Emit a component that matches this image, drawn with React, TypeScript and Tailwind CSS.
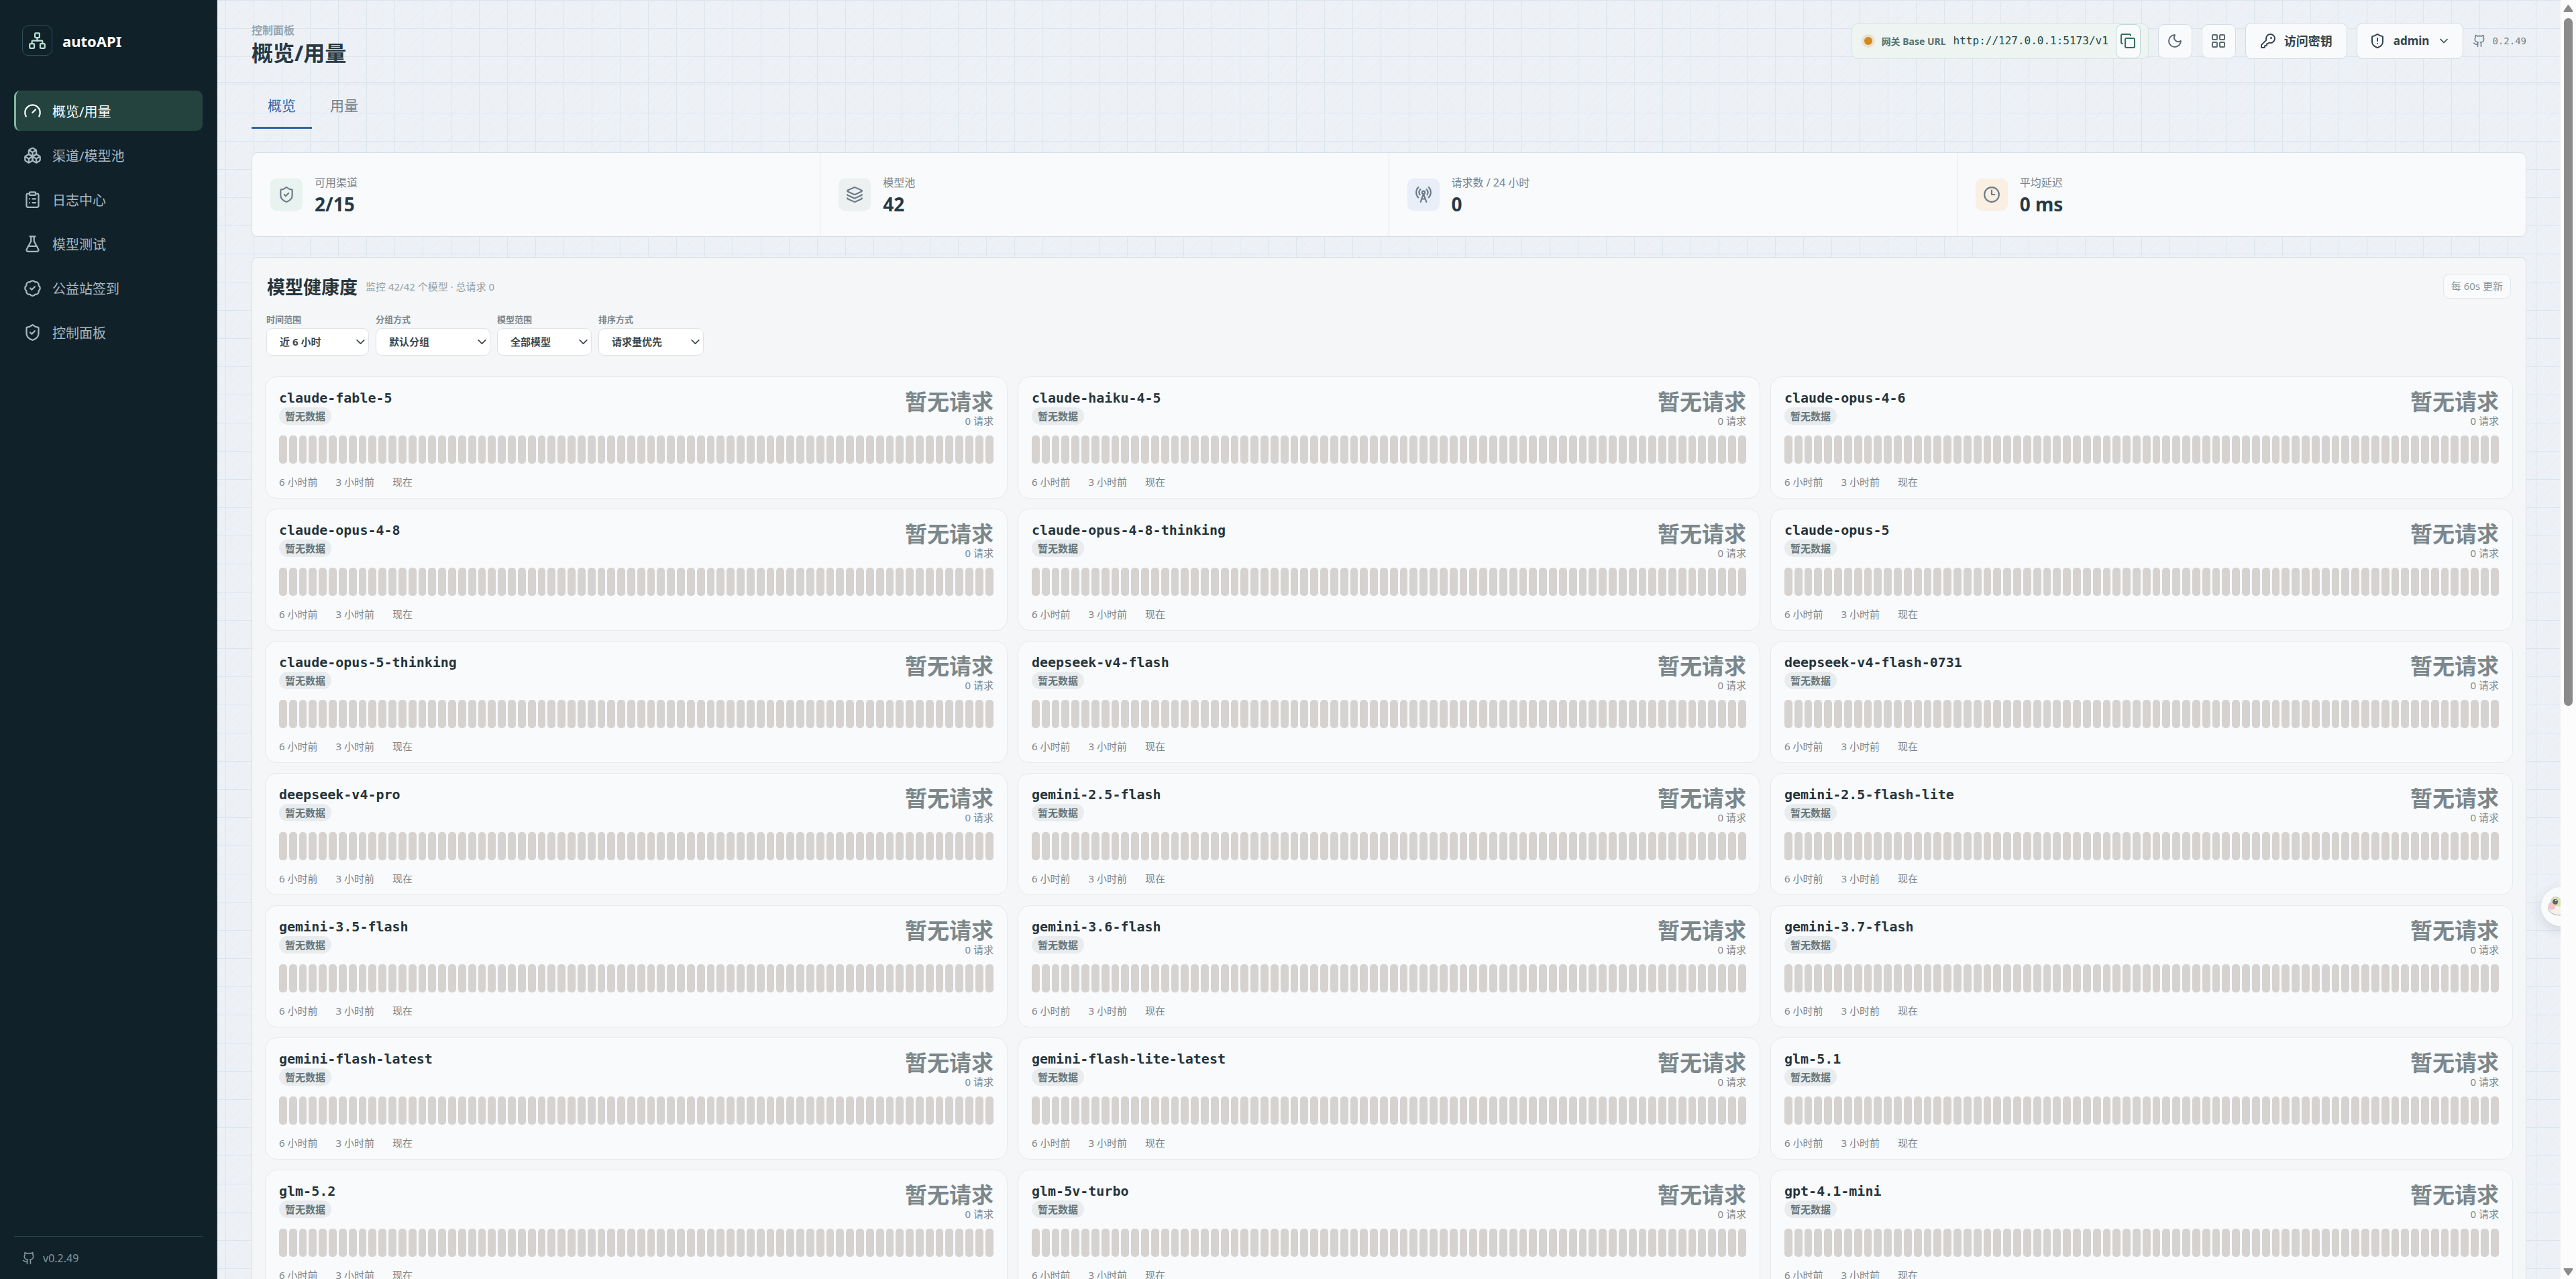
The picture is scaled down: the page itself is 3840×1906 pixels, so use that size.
import * as React from "react";
import {
  BadgeCheck,
  Boxes,
  ChevronDown,
  ClipboardList,
  Clock3,
  Copy,
  FlaskConical,
  Gauge,
  Github,
  KeyRound,
  Layers,
  LayoutGrid,
  Moon,
  Network,
  RadioTower,
  ShieldAlert,
  ShieldCheck,
  type LucideIcon,
} from "lucide-react";
import clsx from "clsx";

const NAV: { label: string; icon: LucideIcon }[] = [
  { label: "概览/用量", icon: Gauge },
  { label: "渠道/模型池", icon: Boxes },
  { label: "日志中心", icon: ClipboardList },
  { label: "模型测试", icon: FlaskConical },
  { label: "公益站签到", icon: BadgeCheck },
  { label: "控制面板", icon: ShieldCheck },
];

const STATS: { label: string; value: string; icon: LucideIcon; tone: string }[] = [
  { label: "可用渠道", value: "2/15", icon: ShieldCheck, tone: "bg-[#e8f2ee]" },
  { label: "模型池", value: "42", icon: Layers, tone: "bg-[#ecf0f1]" },
  { label: "请求数 / 24 小时", value: "0", icon: RadioTower, tone: "bg-[#e8eff8]" },
  { label: "平均延迟", value: "0 ms", icon: Clock3, tone: "bg-[#f9f0e3]" },
];

const FILTERS = [
  { id: "range", label: "时间范围", value: "近 6 小时", width: "w-[153px]" },
  { id: "group", label: "分组方式", value: "默认分组", width: "w-[171px]" },
  { id: "scope", label: "模型范围", value: "全部模型", width: "w-[141px]" },
  { id: "sort", label: "排序方式", value: "请求量优先", width: "w-[157px]" },
];

const MODELS = [
  "claude-fable-5",
  "claude-haiku-4-5",
  "claude-opus-4-6",
  "claude-opus-4-8",
  "claude-opus-4-8-thinking",
  "claude-opus-5",
  "claude-opus-5-thinking",
  "deepseek-v4-flash",
  "deepseek-v4-flash-0731",
  "deepseek-v4-pro",
  "gemini-2.5-flash",
  "gemini-2.5-flash-lite",
  "gemini-3.5-flash",
  "gemini-3.6-flash",
  "gemini-3.7-flash",
  "gemini-flash-latest",
  "gemini-flash-lite-latest",
  "glm-5.1",
  "glm-5.2",
  "glm-5v-turbo",
  "gpt-4.1-mini",
];

const BUCKETS = Array.from({ length: 72 }, (_, i) => i);

function Sidebar() {
  return (
    <aside className="flex w-[324px] shrink-0 flex-col border-r border-[#2b3f49] bg-[#10212a] px-[21px]">
      <div className="flex items-center gap-[15px] pt-[38px] pl-3">
        <span className="flex size-[45px] items-center justify-center rounded-[9px] border border-[#2f5157] text-[#b9e0d2]">
          <Network size={27} />
        </span>
        <span className="text-[22px] leading-8 font-bold text-white">autoAPI</span>
      </div>

      <nav className="mt-[52px] flex flex-col gap-1.5">
        {NAV.map(({ label, icon: Icon }, i) => (
          <a
            key={label}
            href="#"
            className={clsx(
              "flex h-[60px] items-center gap-4 rounded-[9px] border-l-3 pl-[11px] text-[20px] leading-7",
              i === 0 ? "border-[#7fb8a4] bg-[#24433f] text-white" : "border-transparent text-[#a9b7be]",
            )}
          >
            <Icon size={27} />
            <span className="pt-[3px]">{label}</span>
          </a>
        ))}
      </nav>

      <div className="mt-auto flex h-16 items-center gap-[11px] border-t border-[#2b414b] pl-3 text-[16px] text-[#84979f]">
        <Github size={20} />
        v0.2.49
      </div>
    </aside>
  );
}

function IconButton({ label, icon: Icon }: { label: string; icon: LucideIcon }) {
  return (
    <button
      type="button"
      aria-label={label}
      className="flex size-[51px] items-center justify-center rounded-[9px] border border-[#d3dde3] bg-[#f8fafc] text-[#5c6b74]"
    >
      <Icon size={24} />
    </button>
  );
}

function Header() {
  return (
    <header className="flex h-[123px] items-center justify-between border-b border-[#d3dee6] px-[51px]">
      <div className="pt-3">
        <p className="text-[16px] leading-6 font-bold text-[#97a4b0]">控制面板</p>
        <h1 className="text-[32px] leading-[44px] font-bold text-[#263a45]">概览/用量</h1>
      </div>

      <div className="flex items-center gap-3.5">
        <div className="flex h-[53px] items-center gap-[11px] rounded-[9px] border border-[#d3e5de] bg-[#edf4f2] pr-[11px] pl-[18px]">
          <span className="mr-[3px] size-3 rounded-full bg-[#d28a20] ring-4 ring-[#eae1cd]" />
          <span className="text-[14px] font-bold text-[#54716c]">网关 Base URL</span>
          <code className="font-['DejaVu_Sans_Mono',monospace] text-[16px] text-[#234a43]">
            http://127.0.0.1:5173/v1
          </code>
          <button
            type="button"
            aria-label="复制"
            className="flex h-[51px] w-[37px] items-center justify-center rounded-[9px] border border-[#bcd9cd] bg-[#f8fafc] text-[#2f6f5c]"
          >
            <Copy size={24} />
          </button>
        </div>
        <IconButton label="切换主题" icon={Moon} />
        <IconButton label="布局" icon={LayoutGrid} />
        <button
          type="button"
          className="flex h-[54px] items-center gap-3 rounded-[9px] border border-[#cfdae1] bg-[#f8fafc] px-[21px] text-[18px] font-bold text-[#34444d]"
        >
          <KeyRound size={24} />
          访问密钥
        </button>
        <button
          type="button"
          className="flex h-[54px] items-center gap-3 rounded-[9px] border border-[#cfdae1] bg-[#f8fafc] px-[18px] text-[17px] font-bold text-[#34444d]"
        >
          <ShieldAlert size={24} />
          admin
          <ChevronDown size={20} />
        </button>
        <a
          href="#"
          className="flex items-center gap-[9px] font-['DejaVu_Sans_Mono',monospace] text-[14px] text-[#71808d]"
        >
          <Github size={20} />
          0.2.49
        </a>
      </div>
    </header>
  );
}

function StatCells() {
  return (
    <section className="mt-[35px] grid h-[126px] grid-cols-4 divide-x divide-[#e2e9ee] rounded-[9px] border border-[#d3dee6] bg-[#f8fafc]">
      {STATS.map(({ label, value, icon: Icon, tone }) => (
        <div key={label} className="flex items-center gap-[18px] px-[27px]">
          <span className={clsx("flex size-12 items-center justify-center rounded-[9px] text-[#6b7b88]", tone)}>
            <Icon size={26} />
          </span>
          <div className="pt-[3px]">
            <p className="text-[16px] leading-6 text-[#77858f]">{label}</p>
            <p className="text-[28px] leading-10 font-bold text-[#263a45]">{value}</p>
          </div>
        </div>
      ))}
    </section>
  );
}

function Filters() {
  return (
    <div className="mt-[21px] flex gap-2.5 px-0.5">
      {FILTERS.map((f) => (
        <div key={f.id} className="flex flex-col gap-[3px]">
          <label htmlFor={f.id} className="text-[13px] leading-5 font-bold text-[#7b868b]">
            {f.label}
          </label>
          <div className={clsx("relative", f.width)}>
            <select
              id={f.id}
              className="h-[41px] w-full appearance-none rounded-[9px] border border-[#dde3e6] bg-white pl-[19px] text-[15px] font-bold text-[#3a484e]"
            >
              <option>{f.value}</option>
            </select>
            <ChevronDown
              size={21}
              className="pointer-events-none absolute top-2.5 right-0.5 text-[#3a484e]"
            />
          </div>
        </div>
      ))}
    </div>
  );
}

function ModelCard({ name }: { name: string }) {
  return (
    <article className="rounded-[18px] border border-[#e6eaec] bg-[#f8fafc] px-5 pt-5 pb-[13px]">
      <div className="flex h-14 items-start justify-between">
        <div className="flex flex-col items-start gap-[3px]">
          <h3 className="font-['DejaVu_Sans_Mono',monospace] text-[20px] leading-[22px] font-bold text-[#26343a]">
            {name}
          </h3>
          <span className="rounded-full bg-[#e8ecee] px-[9px] text-[15px] leading-[26px] font-bold text-[#667579]">
            暂无数据
          </span>
        </div>
        <div className="text-right">
          <p className="text-[33px] leading-[34px] font-bold text-[#7b878b]">暂无请求</p>
          <p className="text-[15px] leading-[22px] text-[#7d888d]">0 请求</p>
        </div>
      </div>

      <div className="mt-[11px] flex h-[42px] gap-[3px]">
        {BUCKETS.map((b) => (
          <span key={b} className="flex-1 rounded-[5px] bg-[#d6d2cf]" />
        ))}
      </div>

      <div className="mt-4 flex gap-[27px] text-[15px] leading-[22px] text-[#7d8488]">
        <span>6 小时前</span>
        <span>3 小时前</span>
        <span>现在</span>
      </div>
    </article>
  );
}

function HealthPanel() {
  return (
    <section className="mt-[30px] rounded-[9px] border border-[#d3dee6] bg-[#f4f6f8] px-[19px] pt-6 pb-5">
      <div className="flex h-[37px] items-center justify-between px-[3px]">
        <div className="flex items-center gap-3 pt-0.5">
          <h2 className="text-[27px] leading-9 font-bold text-[#26343a]">模型健康度</h2>
          <span className="text-[15px] text-[#95a0a5]">监控 42/42 个模型 · 总请求 0</span>
        </div>
        <span className="flex h-[37px] items-center rounded-[9px] border border-[#e2e7ea] bg-[#f8fafc] px-[11px] text-[15px] text-[#8a969c]">
          每 60s 更新
        </span>
      </div>
      <Filters />
      <div className="mt-[31px] grid grid-cols-3 gap-[15px]">
        {MODELS.map((m) => (
          <ModelCard key={m} name={m} />
        ))}
      </div>
    </section>
  );
}

// Round helper button, half tucked behind the right edge
function FrogButton() {
  return (
    <button
      type="button"
      aria-label="助手"
      className="absolute top-[1322px] -right-[29px] flex size-[58px] items-center justify-center rounded-full bg-[#f9fafc] shadow-[0_6px_18px_rgba(40,60,80,0.14)]"
    >
      <svg width="38" height="30" viewBox="0 0 38 30" className="opacity-75">
        <path
          d="M1 17C1 12 3 10 5 8C5 3 8 1 12 1C15 1 17 3 18 4H22C23 3 25 1 28 1C32 1 34 4 34 8C36 10 37 13 37 17C37 24 29 28 19 28C9 28 1 24 1 17Z"
          fill="#f1efe4"
          stroke="#8f9188"
        />
        <path
          d="M3 12C4 10 5 9 5 8C5 3 8 1 12 1C15 1 17 3 18 4H22C23 3 25 1 28 1C32 1 34 4 34 8L36 12C32 16 8 15 3 12Z"
          fill="#cbdc90"
        />
        <circle cx="11" cy="8" r="4" fill="#29323b" />
        <circle cx="28" cy="8" r="4" fill="#29323b" />
        <circle cx="12" cy="6" r="1" fill="#fff" />
        <circle cx="6" cy="15" r="5" fill="#f4b3bb" />
        <circle cx="33" cy="15" r="5" fill="#f4b3bb" />
      </svg>
    </button>
  );
}

function ScrollRail() {
  return (
    <div className="flex w-[23px] shrink-0 flex-col items-center bg-[#fcfcfc] pt-[7px] pb-[5px]" aria-hidden="true">
      <svg width="15" height="11" viewBox="0 0 15 11" fill="#8b8b8b">
        <path d="M6.300 1a1.500 1.500 0 0 1 2.400 0l5.500 8a1.200 1.200 0 0 1-1 2H1.800a1.200 1.200 0 0 1-1-2z" />
      </svg>
      <div className="my-[9px] flex w-[13px] flex-1 flex-col">
        <div className="h-[55.3%] rounded-full bg-[#8b8b8b]" />
      </div>
      <svg width="15" height="11" viewBox="0 0 15 11" fill="#8b8b8b">
        <path d="M6.300 10a1.500 1.500 0 0 0 2.400 0l5.500-8a1.200 1.200 0 0 0-1-2H1.800a1.200 1.200 0 0 0-1 2z" />
      </svg>
    </div>
  );
}

export default function App() {
  return (
    <div className="flex h-screen overflow-hidden bg-[#edf1f6] [background-image:linear-gradient(90deg,#dce5ec_1px,transparent_1px),linear-gradient(#dce5ec_1px,transparent_1px),linear-gradient(135deg,transparent_48%,#e5eaef_48%,#e5eaef_51%,transparent_51%)] [background-position:0_0,0_0,12px_16px] [background-size:42px_42px,42px_42px,27px_18px] font-['Noto_Sans','Noto_Sans_CJK_SC',sans-serif]">
      <Sidebar />
      <div className="relative min-w-0 flex-1 overflow-hidden">
        <Header />
        <main className="px-[51px]">
          <div role="tablist" className="flex gap-[3px] text-[21px]">
            <button
              type="button"
              role="tab"
              aria-selected="true"
              className="h-[69px] border-b-3 border-[#2f68a8] px-6 pt-[3px] text-[#2f68a8]"
            >
              概览
            </button>
            <button
              type="button"
              role="tab"
              aria-selected="false"
              className="h-[69px] border-b-3 border-transparent px-6 pt-[3px] text-[#71808d]"
            >
              用量
            </button>
          </div>
          <StatCells />
          <HealthPanel />
        </main>
        <FrogButton />
      </div>
      <ScrollRail />
    </div>
  );
}
